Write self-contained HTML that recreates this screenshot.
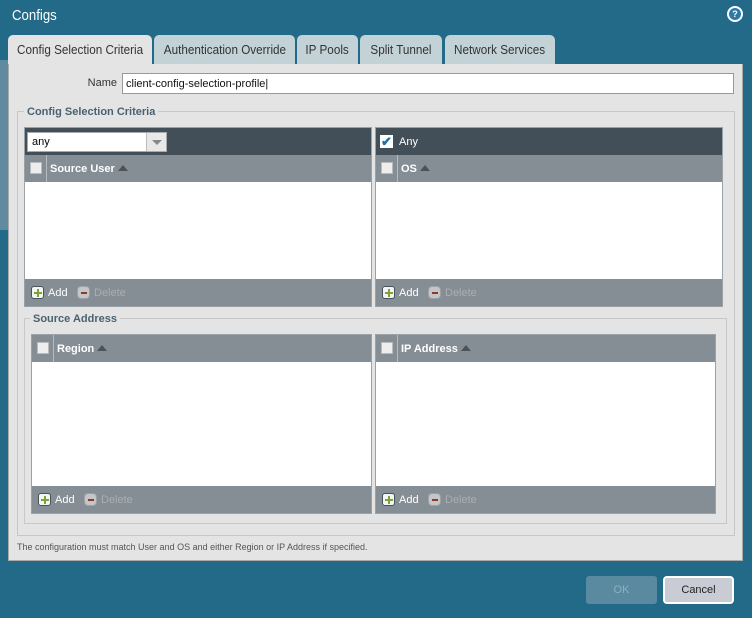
<!DOCTYPE html>
<html><head><meta charset="utf-8"><style>
*{box-sizing:border-box;margin:0;padding:0}
body{width:752px;height:618px;background:#236a88;font-family:"Liberation Sans",sans-serif;position:relative;overflow:hidden}
.a{position:absolute}
.title{left:12px;top:7px;color:#fff;font-size:15px;transform:scaleX(.88);transform-origin:left}
.help{left:727px;top:6px;width:16px;height:16px;border-radius:50%;background:#fff;}
.help i{position:absolute;left:2px;top:2px;width:12px;height:12px;border-radius:50%;background:#2a79a8;color:#fff;font-style:normal;font-weight:bold;font-size:9px;text-align:center;line-height:12px}
.tab{top:35px;height:29px;background:#c3d2d7;border-radius:5px 5px 0 0;font-size:13px;color:#333;text-align:center;line-height:29px;white-space:nowrap}
.tab span{display:inline-block;transform:scaleX(.9)}
.panel{left:8px;top:64px;width:735px;height:497px;background:#e4e4e4;border:1px solid #aaa;border-top:none}
.fs{border:1px solid #c8c8c8}
.leg{background:#e4e4e4;color:#4a6270;font-weight:bold;font-size:11px;padding:0 3px}
.grid{background:#fff;border:1px solid #9aa1a7}
.ch{position:absolute;left:0;right:0;height:27px;background:#868e95;color:#fff;font-size:11px;font-weight:bold}
.ch .cb{position:absolute;left:5px;top:7px;width:12px;height:12px;background:#eee;border:1px solid #bbb}
.ch .sep{position:absolute;left:21px;top:0;width:1px;height:27px;background:#b5babe}
.ch .t{position:absolute;left:25px;top:8px}
.tri{display:inline-block;width:0;height:0;border-left:5px solid transparent;border-right:5px solid transparent;border-bottom:6px solid #4a535a;margin-left:3px;vertical-align:1px}
.ft{position:absolute;left:0;right:0;bottom:0;height:27px;background:#868e95;font-size:11px}
.pl{position:absolute;left:6px;top:7px;width:13px;height:13px;border-radius:3px;background:#f4f4f4;border:1px solid #4a535a}
.pl:before{content:"";position:absolute;left:5px;top:2px;width:2px;height:8px;background:#7aa33a}
.pl:after{content:"";position:absolute;left:2px;top:5px;width:8px;height:2px;background:#7aa33a}
.mi{position:absolute;left:52px;top:7px;width:13px;height:13px;border-radius:4px;background:#c4c6c8;border:1px solid #9ea2a6}
.mi:after{content:"";position:absolute;left:3px;top:5px;width:6px;height:2px;background:#8b3b2d}
.ad{position:absolute;left:23px;top:8px;color:#fff}
.de{position:absolute;left:69px;top:8px;color:#a9aeb2}
.dark{position:absolute;left:0;right:0;top:0;height:27px;background:#434f58}
</style></head><body>
<div class="a" style="left:0;top:60px;width:8px;height:170px;background:#5f8aa0"></div>
<div class="a title">Configs</div>
<div class="a help"><i>?</i></div>
<div class="a tab" style="left:8px;width:144px;background:#e4e4e4"><span>Config Selection Criteria</span></div>
<div class="a tab" style="left:154px;width:141px"><span>Authentication Override</span></div>
<div class="a tab" style="left:297px;width:61px"><span style="border-bottom:1px dotted #d44">IP Pools</span></div>
<div class="a tab" style="left:360px;width:82px"><span>Split Tunnel</span></div>
<div class="a tab" style="left:445px;width:110px"><span>Network Services</span></div>
<div class="a panel"></div>
<div class="a" style="left:60px;top:77px;font-size:11px;color:#333;width:57px;text-align:right">Name</div>
<div class="a" style="left:122px;top:73px;width:612px;height:21px;background:#fff;border:1px solid #999;font-size:11px;padding:4px 3px;color:#111">client-config-selection-profile|</div>

<div class="a fs" style="left:17px;top:111px;width:718px;height:425px"></div>
<div class="a leg" style="left:24px;top:106px">Config Selection Criteria</div>

<div class="a grid" style="left:24px;top:127px;width:348px;height:180px">
 <div class="dark"></div>
 <div class="a" style="left:2px;top:4px;width:140px;height:20px;background:#fff;border:1px solid #aaa;font-size:11px;padding:3px 4px">any<div class="a" style="right:0;top:0;width:20px;height:18px;background:#e8e8e8;border-left:1px solid #bbb"><div class="a" style="left:5px;top:7px;border-left:5px solid transparent;border-right:5px solid transparent;border-top:5px solid #888"></div></div></div>
 <div class="ch" style="top:27px"><div class="cb"></div><div class="sep"></div><div class="t">Source User<span class="tri"></span></div></div>
 <div class="ft"><div class="pl"></div><div class="ad">Add</div><div class="mi"></div><div class="de">Delete</div></div>
</div>
<div class="a grid" style="left:375px;top:127px;width:348px;height:180px">
 <div class="dark"><div class="a" style="left:4px;top:7px;width:13px;height:13px;background:#fff;color:#1d6fa5;font-size:13px;font-weight:bold;line-height:13px;text-align:center">✔</div><div class="a" style="left:23px;top:8px;color:#fff;font-size:11px">Any</div></div>
 <div class="ch" style="top:27px"><div class="cb"></div><div class="sep"></div><div class="t">OS<span class="tri"></span></div></div>
 <div class="ft"><div class="pl"></div><div class="ad">Add</div><div class="mi"></div><div class="de">Delete</div></div>
</div>

<div class="a fs" style="left:24px;top:318px;width:703px;height:206px"></div>
<div class="a leg" style="left:30px;top:313px">Source Address</div>
<div class="a grid" style="left:31px;top:334px;width:341px;height:180px">
 <div class="ch" style="top:0"><div class="cb"></div><div class="sep"></div><div class="t">Region<span class="tri"></span></div></div>
 <div class="ft"><div class="pl"></div><div class="ad">Add</div><div class="mi"></div><div class="de">Delete</div></div>
</div>
<div class="a grid" style="left:375px;top:334px;width:341px;height:180px">
 <div class="ch" style="top:0"><div class="cb"></div><div class="sep"></div><div class="t">IP Address<span class="tri"></span></div></div>
 <div class="ft"><div class="pl"></div><div class="ad">Add</div><div class="mi"></div><div class="de">Delete</div></div>
</div>

<div class="a" style="left:17px;top:542px;font-size:9px;color:#555">The configuration must match User and OS and either Region or IP Address if specified.</div>
<div class="a" style="left:586px;top:576px;width:71px;height:28px;background:#5a8aa0;border-radius:3px;color:#8fb0c0;font-size:11px;text-align:center;line-height:28px">OK</div>
<div class="a" style="left:663px;top:576px;width:71px;height:28px;background:#c9ccd4;border:2px solid #fff;border-radius:4px;color:#222;font-size:11px;text-align:center;line-height:24px">Cancel</div>
</body></html>
